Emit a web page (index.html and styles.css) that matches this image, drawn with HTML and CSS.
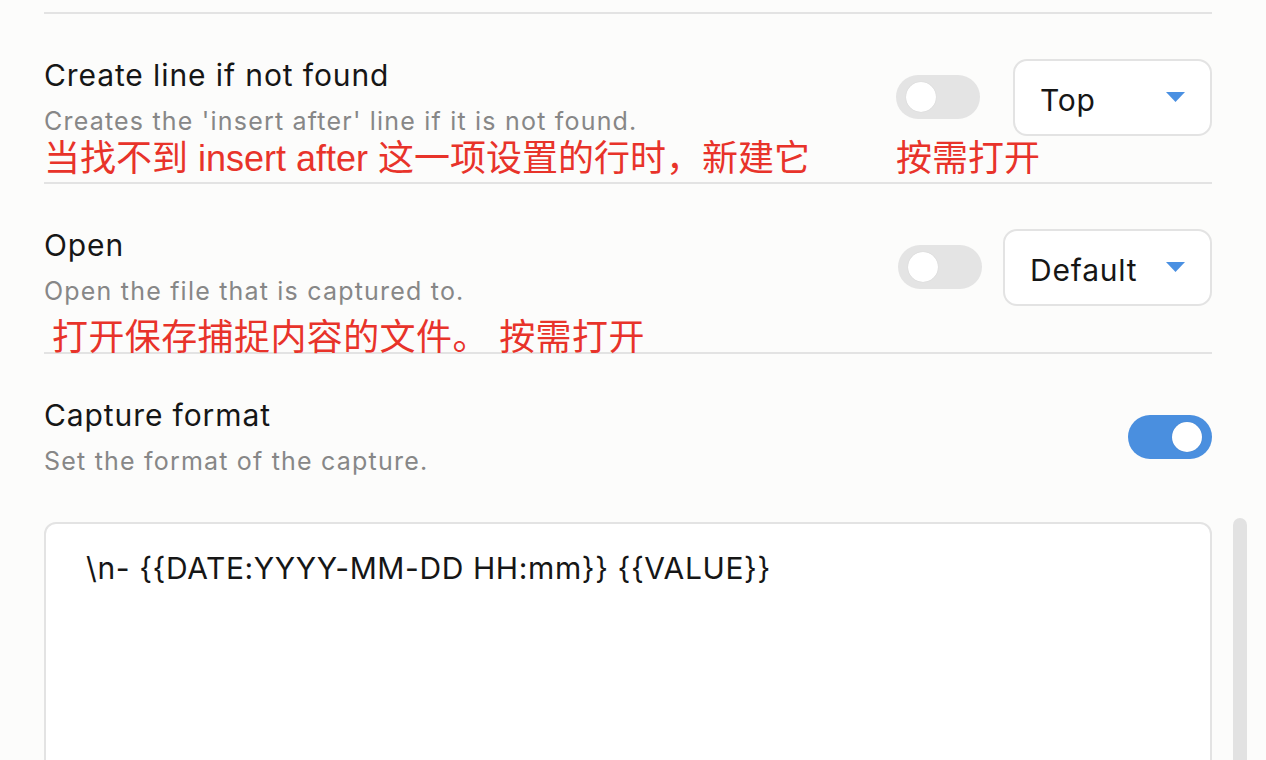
FILE: index.html
```html
<!DOCTYPE html>
<html lang="en">
<head>
<meta charset="utf-8">
<title>Capture settings</title>
<link rel="stylesheet" href="styles.css">
</head>
<body>
<div class="settings">
  <div class="setting">
    <div class="info">
      <div class="name">Create line if not found</div>
      <div class="desc">Creates the 'insert after' line if it is not found.</div>
    </div>
    <div class="controls controls-wide">
      <div class="toggle"><span class="knob"></span></div>
      <div class="dropdown dropdown-top"><span>Top</span><svg class="caret" width="19" height="10" viewBox="0 0 19 10"><polygon points="0,0 19,0 9.5,10" fill="#4a90e2"/></svg></div>
    </div>
    <div class="note">当找不到 insert after 这一项设置的行时，新建它</div>
    <div class="note">按需打开</div>
  </div>
  <div class="setting setting-open">
    <div class="info">
      <div class="name">Open</div>
      <div class="desc">Open the file that is captured to.</div>
    </div>
    <div class="controls controls-narrow">
      <div class="toggle"><span class="knob"></span></div>
      <div class="dropdown dropdown-default"><span>Default</span><svg class="caret" width="19" height="10" viewBox="0 0 19 10"><polygon points="0,0 19,0 9.5,10" fill="#4a90e2"/></svg></div>
    </div>
    <div class="note note-shift">打开保存捕捉内容的文件。 按需打开</div>
  </div>
  <div class="setting setting-last">
    <div class="info">
      <div class="name">Capture format</div>
      <div class="desc">Set the format of the capture.</div>
    </div>
    <div class="controls">
      <div class="toggle toggle-on"><span class="knob"></span></div>
    </div>
  </div>
  <div class="format-box">\n- {{DATE:YYYY-MM-DD HH:mm}} {{VALUE}}</div>
</div>
<div class="scroll-thumb"></div>
</body>
</html>
```
FILE: styles.css
```css
html, body {
  margin: 0;
  height: 100%;
  overflow: hidden;
}
body {
  background: #fcfcfb;
  font-family: Inter, "Noto Sans", sans-serif;
  color: #1c1c1c;
}
.settings {
  margin-left: 44px;
  width: 1168px;
  padding-top: 12px;
}
.setting {
  border-top: 2px solid #e3e3e3;
  display: grid;
  grid-template-columns: 1fr auto;
  padding-top: 44px;
  padding-bottom: 5px;
}
.setting-open {
  padding-bottom: 0;
}
.setting-last {
  padding-bottom: 0;
}
.name {
  font-size: 30px;
  line-height: 34px;
  letter-spacing: 0.9px;
  color: #161616;
}
.desc {
  font-size: 25px;
  line-height: 30px;
  letter-spacing: 1.2px;
  color: #878787;
  margin-top: 14px;
}
.controls {
  display: flex;
  align-items: center;
  justify-content: flex-end;
}
.controls-wide {
  gap: 33px;
}
.controls-narrow {
  gap: 21px;
}
.toggle {
  width: 84px;
  height: 44px;
  box-sizing: border-box;
  border-radius: 22px;
  background: #e4e4e4;
  display: flex;
  align-items: center;
  padding: 0 10px;
}
.toggle-on {
  background: #4a8fdf;
  justify-content: flex-end;
}
.knob {
  width: 30px;
  height: 30px;
  border-radius: 50%;
  background: #ffffff;
  box-shadow: 0 0 1px rgba(0, 0, 0, 0.15);
}
.dropdown {
  height: 77px;
  box-sizing: border-box;
  border: 2px solid #e3e3e3;
  border-radius: 14px;
  background: #ffffff;
  display: flex;
  align-items: center;
  justify-content: space-between;
  padding: 5px 25px 0 25px;
  font-size: 30px;
  letter-spacing: 0.8px;
  color: #161616;
}
.dropdown-top {
  width: 199px;
}
.dropdown-default {
  width: 209px;
}
.caret {
  display: block;
  margin-top: -5px;
}
.note {
  font-family: "Liberation Sans", "Noto Sans CJK SC", sans-serif;
  color: #e8332a;
  font-size: 36px;
  line-height: 36px;
  margin-top: 5px;
  white-space: nowrap;
}
.note-shift {
  margin-top: 14px;
  margin-bottom: -4px;
  margin-left: 8px;
  letter-spacing: 0.4px;
}
.format-box {
  margin-top: 46px;
  height: 320px;
  box-sizing: border-box;
  border: 2px solid #e3e3e3;
  border-radius: 12px;
  background: #ffffff;
  padding: 27px 40px;
  font-size: 30px;
  line-height: 34px;
  letter-spacing: 0.6px;
  color: #161616;
}
.scroll-thumb {
  position: fixed;
  left: 1233px;
  top: 518px;
  width: 14px;
  height: 280px;
  border-radius: 7px;
  background: #e2e2e2;
}
```
